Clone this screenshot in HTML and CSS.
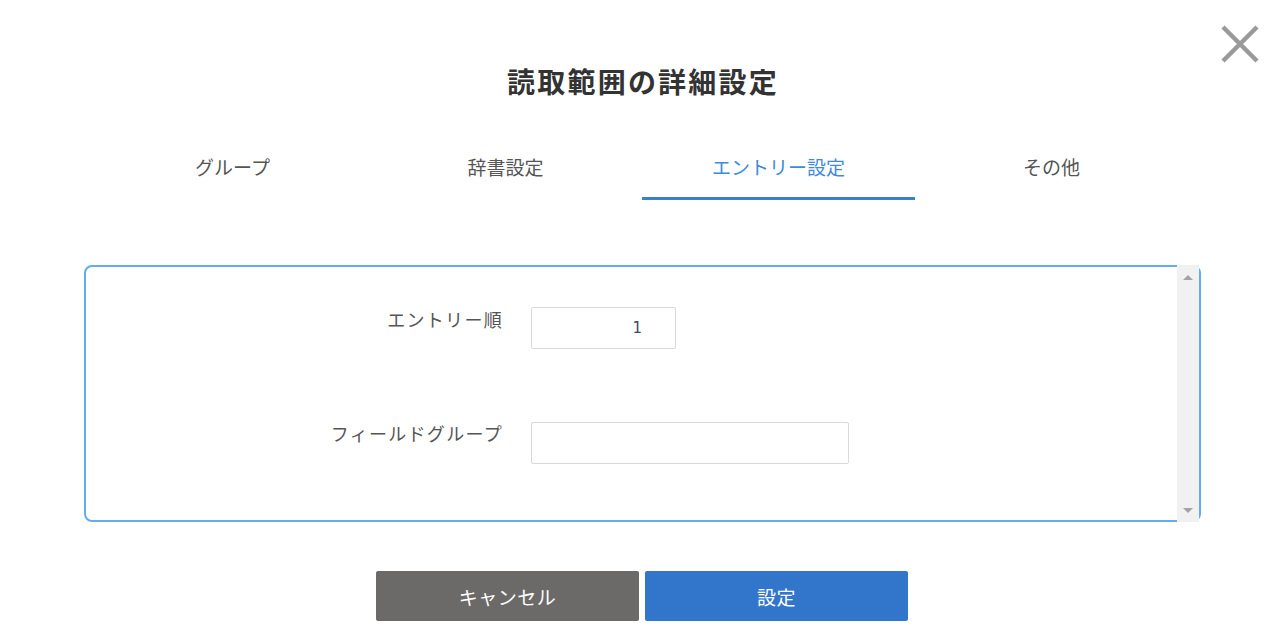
FILE: index.html
```html
<!DOCTYPE html>
<html lang="ja">
<head>
<meta charset="utf-8">
<title>読取範囲の詳細設定</title>
<link rel="stylesheet" href="styles.css">
</head>
<body>
<div class="dialog">
  <div class="header">
    <h1 class="title">読取範囲の詳細設定</h1>
    <button class="close" aria-label="閉じる">
      <svg width="40" height="40" viewBox="0 0 40 40"><path d="M3 3 L37 37 M37 3 L3 37" stroke="#9a9a9a" stroke-width="4.5" fill="none"/></svg>
    </button>
  </div>
  <div class="tabs">
    <div class="tab">グループ</div>
    <div class="tab">辞書設定</div>
    <div class="tab active">エントリー設定</div>
    <div class="tab">その他</div>
  </div>
  <div class="panel">
    <div class="panel-body">
      <div class="form">
        <label class="label">エントリー順</label>
        <div class="input num">1</div>
        <label class="label label2">フィールドグループ</label>
        <div class="input wide"></div>
      </div>
    </div>
    <div class="scrollbar">
      <span class="arrow up"></span>
      <span class="arrow down"></span>
    </div>
  </div>
  <div class="actions">
    <button class="btn cancel">キャンセル</button>
    <button class="btn ok">設定</button>
  </div>
</div>
</body>
</html>
```
FILE: styles.css
```css
html, body {
  margin: 0;
  padding: 0;
  background: #ffffff;
}
body {
  font-family: "Noto Sans CJK JP", "Noto Sans", sans-serif;
  color: #444;
}
.dialog {
  width: 1288px;
  height: 628px;
  overflow: hidden;
}
.header {
  position: relative;
  padding-top: 62px;
  height: 38px;
}
.title {
  margin: 0;
  text-align: center;
  font-size: 28px;
  line-height: 38px;
  font-weight: bold;
  letter-spacing: 2.2px;
  color: #333;
  padding-right: 2px;
}
.close {
  position: absolute;
  top: 24px;
  left: 1220px;
  width: 40px;
  height: 40px;
  padding: 0;
  border: 0;
  background: none;
}
.close svg { display: block; }
.tabs {
  margin: 50px 100px 0 96px;
  display: grid;
  grid-template-columns: repeat(4, 273px);
}
.tab {
  text-align: center;
  font-size: 19px;
  line-height: 26px;
  padding: 4px 0 17px;
  color: #555;
  border-bottom: 3px solid transparent;
}
.tab.active {
  color: #3f8ad9;
  border-bottom-color: #3a7fd4;
}
.panel {
  margin: 65px 87px 0 84px;
  height: 253px;
  border: 2px solid #62acef;
  border-radius: 8px;
  display: flex;
}
.panel-body {
  flex: 1;
  padding-top: 40px;
}
.form {
  display: grid;
  grid-template-columns: 417px auto;
  column-gap: 28px;
  row-gap: 73px;
  align-items: start;
}
.label {
  justify-self: end;
  font-size: 18px;
  line-height: 26px;
  color: #555;
  letter-spacing: 1.3px;
  margin-top: -1px;
}
.label2 { margin-top: -2px; }
.input {
  box-sizing: border-box;
  height: 42px;
  border: 1px solid #d9d9d9;
  border-radius: 2px;
  background: #fff;
}
.input.num {
  width: 145px;
  text-align: right;
  padding-right: 33px;
  font-family: "DejaVu Sans", sans-serif;
  font-size: 15px;
  line-height: 40px;
  color: #3d4a66;
}
.input.wide { width: 318px; }
.scrollbar {
  width: 22px;
  margin: -2px 0 -2px 0;
  background: #f1f1f1;
  display: flex;
  flex-direction: column;
  justify-content: space-between;
  align-items: center;
  padding: 10px 0 9px;
}
.arrow {
  width: 0;
  height: 0;
  border-left: 5px solid transparent;
  border-right: 5px solid transparent;
}
.arrow.up { border-bottom: 5px solid #a3a3a3; }
.arrow.down { border-top: 5px solid #a3a3a3; }
.actions {
  margin-top: 49px;
  display: flex;
  justify-content: center;
  gap: 6px;
  padding-right: 4px;
}
.btn {
  width: 263px;
  height: 50px;
  border: 0;
  border-radius: 2px;
  color: #fff;
  font-family: "Noto Sans CJK JP", sans-serif;
  font-size: 19px;
  letter-spacing: 0.5px;
}
.btn.cancel { background: #6b6a68; }
.btn.ok { background: #3276cc; }
```
